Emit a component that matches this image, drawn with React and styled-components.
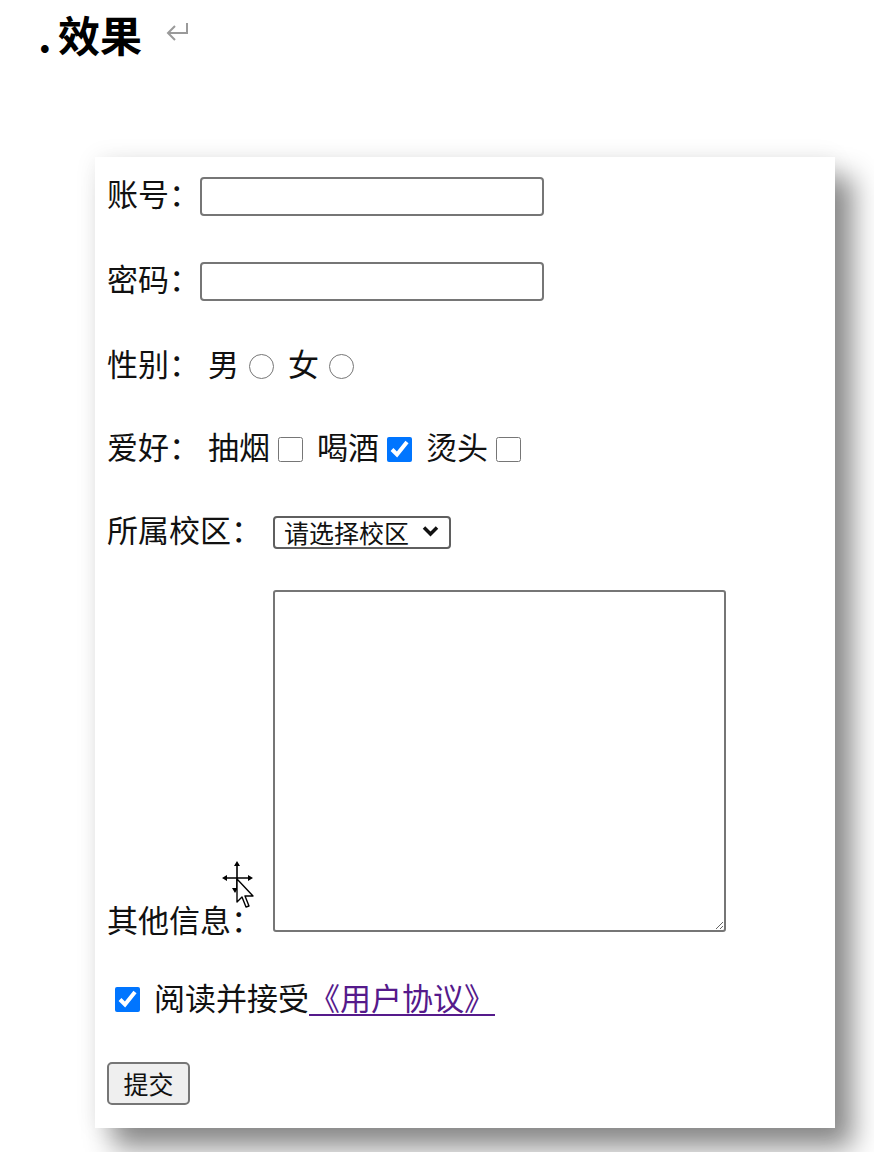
import React from 'react';
import styled, { createGlobalStyle } from 'styled-components';

const Global = createGlobalStyle`
  html, body {
    margin: 0;
    padding: 0;
    background: #fff;
  }
  body {
    font-family: "Noto Sans CJK SC", "Noto Sans", sans-serif;
    color: #111;
  }
`

const Page = styled.div`
  width: 874px;
  height: 1152px;
  overflow: hidden;
`

const Heading = styled.h2`
  display: flex;
  align-items: center;
  height: 48px;
  margin: 9px 0 0 38px;
  font-size: 42px;
  font-weight: 700;
  color: #000;
`

const Dot = styled.span`
  display: inline-block;
  width: 20px;
`

const Mark = styled.svg`
  margin-left: 24px;
  width: 24px;
  height: 24px;
`

const Card = styled.form`
  position: relative;
  width: 740px;
  height: 971px;
  box-sizing: border-box;
  margin: 100px 0 0 95px;
  padding: 17px 12px 0;
  background: #fff;
  box-shadow: 18px 20px 26px rgba(0, 0, 0, 0.45), 0 0 22px rgba(0, 0, 0, 0.07);
  font-size: 31px;
`

const Row = styled.div`
  display: flex;
  align-items: center;
  height: 44px;
  margin-top: ${p => p.$gap || 0}px;
  white-space: nowrap;
`

/* text sits a little above the middle of the controls */
const Label = styled.span`
  line-height: 44px;
  padding-bottom: 6px;
`

const TextInput = styled.input`
  width: 344px;
  height: 39px;
  box-sizing: border-box;
  margin: 0;
  padding: 2px 4px;
  border: 2px solid #767676;
  border-radius: 4px;
  font-size: 25px;
`

const Choice = styled.label`
  display: inline-flex;
  align-items: center;
  margin-left: 8px;
`

const Radio = styled.input.attrs({ type: 'radio' })`
  width: 25px;
  height: 25px;
  margin: 0 6px 0 10px;
`

const Check = styled.input.attrs({ type: 'checkbox' })`
  width: 25px;
  height: 25px;
  margin: 0 6px 0 8px;
`

const SelectWrap = styled.span`
  position: relative;
  display: inline-block;
  margin-left: 11px;
`

const Select = styled.select`
  display: block;
  width: 178px;
  height: 33px;
  box-sizing: border-box;
  padding: 0 0 0 9px;
  border: 2px solid #5f5f5f;
  border-radius: 4px;
  background: #fff;
  appearance: none;
  font-family: "Noto Sans CJK SC", sans-serif;
  font-size: 25px;
  line-height: 29px;
  color: #111;
`

const Chevron = styled.svg`
  position: absolute;
  right: 12px;
  top: 9px;
  width: 17px;
  height: 12px;
  pointer-events: none;
`

const TextRow = styled.div`
  margin-top: 36px;
  line-height: 31px;
  white-space: nowrap;
`

const Area = styled.textarea`
  width: 453px;
  height: 342px;
  box-sizing: border-box;
  margin: 0 0 0 11px;
  border: 2px solid #767676;
  border-radius: 3px;
  vertical-align: baseline;
`

const Agree = styled.span`
  margin-left: 8px;
  padding-bottom: 6px;
`

const Link = styled.a`
  color: #551a8b;
  text-decoration: underline;
  text-decoration-thickness: 2px;
  text-underline-offset: 4px;
`

const Submit = styled.button`
  width: 83px;
  height: 43px;
  padding: 0;
  border: 2px solid #767676;
  border-radius: 5px;
  background: #efefef;
  font-family: "Noto Sans CJK SC", sans-serif;
  font-size: 25px;
  color: #111;
`

const Cursor = styled.svg`
  position: absolute;
  left: 123px;
  top: 701px;
  width: 40px;
  height: 54px;
  pointer-events: none;
`

export default function App() {
  return (
    <Page>
      <Global />
      <Heading>
        <Dot>.</Dot>效果
        <Mark viewBox="0 0 24 24">
          <path d="M21 2 V12 H3" fill="none" stroke="#9a9a9a" strokeWidth="2" />
          <path d="M9 5 L2 12 L9 19" fill="none" stroke="#9a9a9a" strokeWidth="2" />
        </Mark>
      </Heading>

      <Card onSubmit={e => e.preventDefault()}>
        <Row>
          <Label>账号：</Label>
          <TextInput type="text" />
        </Row>
        <Row $gap={41}>
          <Label>密码：</Label>
          <TextInput type="password" />
        </Row>
        <Row $gap={41}>
          <Label>性别：</Label>
          <Choice><Label>男</Label><Radio name="sex" /></Choice>
          <Choice><Label>女</Label><Radio name="sex" /></Choice>
        </Row>
        <Row $gap={39}>
          <Label>爱好：</Label>
          <Choice><Label>抽烟</Label><Check /></Choice>
          <Choice><Label>喝酒</Label><Check defaultChecked /></Choice>
          <Choice><Label>烫头</Label><Check /></Choice>
        </Row>
        <Row $gap={39}>
          <Label>所属校区：</Label>
          <SelectWrap>
            <Select defaultValue="">
              <option value="">请选择校区</option>
              <option value="bj">北京校区</option>
              <option value="sh">上海校区</option>
            </Select>
            <Chevron viewBox="0 0 17 12">
              <path d="M2 2.5 L8.5 9 L15 2.5" fill="none" stroke="#111" strokeWidth="3.5" />
            </Chevron>
          </SelectWrap>
        </Row>
        <TextRow>
          其他信息：<Area />
        </TextRow>
        <Row $gap={43}>
          <Check defaultChecked />
          <Agree>阅读并接受<Link href="#">《用户协议》</Link></Agree>
        </Row>
        <Row $gap={40}>
          <Submit type="submit">提交</Submit>
        </Row>

        <Cursor viewBox="0 0 40 54">
          <path d="M19 7 V30 M6 20 H32" stroke="#000" strokeWidth="1.6" fill="none" />
          <path d="M19 3 L16 8 H22 Z M4 20 L9 17 V23 Z M35 20 L30 17 V23 Z M17 35 L14 30 H20 Z" fill="#000" />
          <path d="M19 21 V44 L24 39 L28 49 L31 48 L27 38 L35 38 Z" fill="#fff" stroke="#000" strokeWidth="1.4" strokeLinejoin="round" />
        </Cursor>
      </Card>
    </Page>
  );
}
